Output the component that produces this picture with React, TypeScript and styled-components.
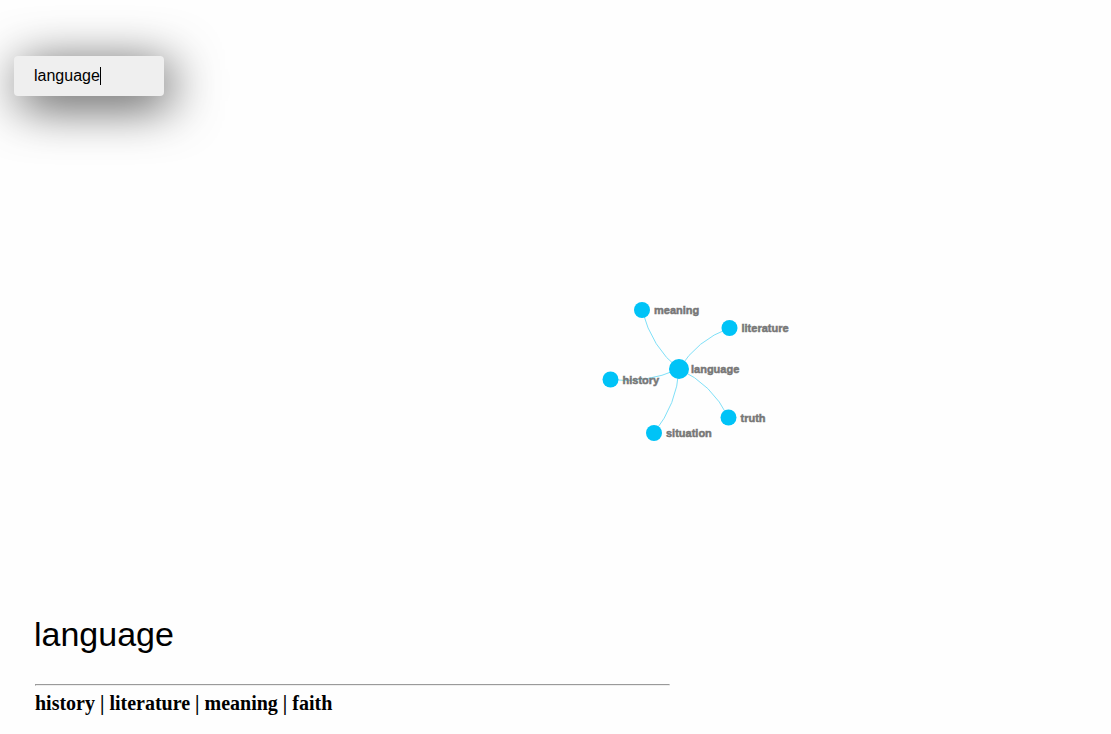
import React, { useState } from "react";
import styled, { createGlobalStyle } from "styled-components";

const GlobalStyle = createGlobalStyle`
  * { box-sizing: border-box; }
  body { margin: 0; background: #fefefe; color: #000; }
`;

const Page = styled.main`
  display: flex;
  flex-direction: column;
  min-height: 100vh;
  padding: 56px 18px 20px 14px;
`;

const SearchField = styled.label`
  position: relative;
  display: block;
  width: 150px;
`;

const SearchInput = styled.input`
  display: block;
  width: 100%;
  height: 40px;
  padding: 0 20px;
  border: 0;
  border-radius: 4px;
  outline: none;
  background: #efefef;
  box-shadow: 6px 9px 50px rgba(0, 0, 0, 0.75);
  color: #000;
  font: 16px "Liberation Sans", Arial, sans-serif;
`;

const Caret = styled.span`
  position: absolute;
  top: 11px;
  left: 86px;
  width: 1px;
  height: 18px;
  background: #000;
`;

const GraphArea = styled.section`
  flex: 1;
  display: flex;
  justify-content: center;
  align-items: flex-start;
  padding: 196px 0 0 292px;
`;

const Graph = styled.svg`
  display: block;
  flex: none;
  width: 200px;
  height: 160px;
`;

const Edge = styled.path`
  fill: none;
  stroke: #7fe0f8;
  stroke-width: 1px;
`;

const Dot = styled.circle`
  fill: #00c3f7;
`;

const NodeLabel = styled.text`
  fill: #777;
  stroke: #777;
  stroke-width: 0.5px;
  font: bold 11px "Liberation Sans", Arial, sans-serif;
`;

const Details = styled.section`
  padding-left: 20px;
`;

const Title = styled.h1`
  margin: 0 0 30px;
  font: 34px/40px "Liberation Sans", Arial, sans-serif;
`;

const Rule = styled.hr`
  width: 60%;
  margin: 0 0 6px 1px;
  border: 1px inset #eee;
`;

const Related = styled.p`
  margin: 0 0 0 1px;
  font: bold 20px/22px "Liberation Serif", "Times New Roman", serif;
`;

const nodes = [
  { name: "meaning", x: 642, y: 310, r: 8, edge: "M679 369 Q652 348 642 310" },
  { name: "literature", x: 729.5, y: 328, r: 8, edge: "M679 369 Q697 340 729.5 328" },
  { name: "history", x: 610.5, y: 379.5, r: 8, edge: "M679 369 Q645 384 610.5 379.5" },
  { name: "truth", x: 728.5, y: 417.5, r: 8, edge: "M679 369 Q712 384 728.5 417.5" },
  { name: "situation", x: 654, y: 433, r: 8, edge: "M679 369 Q677 404 654 433" },
  { name: "language", x: 679, y: 369, r: 10 },
];

const related = ["history", "literature", "meaning", "faith"];

export default function App() {
  const [query, setQuery] = useState("language");
  return (
    <>
      <GlobalStyle />
      <Page>
        <SearchField>
          <SearchInput
            type="text"
            aria-label="Word"
            value={query}
            onChange={(e) => setQuery(e.target.value)}
          />
          <Caret />
        </SearchField>
        <GraphArea>
          <Graph viewBox="600 292 200 160" role="img" aria-label="Word graph">
            {nodes.map((n) => n.edge && <Edge key={n.name} d={n.edge} />)}
            {nodes.map((n) => (
              <Dot key={n.name} cx={n.x} cy={n.y} r={n.r} />
            ))}
            {nodes.map((n) => (
              <NodeLabel key={n.name} x={n.x + 12} y={n.y + 4}>
                {n.name}
              </NodeLabel>
            ))}
          </Graph>
        </GraphArea>
        <Details>
          <Title>language</Title>
          <Rule />
          <Related>{related.join(" | ")}</Related>
        </Details>
      </Page>
    </>
  );
}
